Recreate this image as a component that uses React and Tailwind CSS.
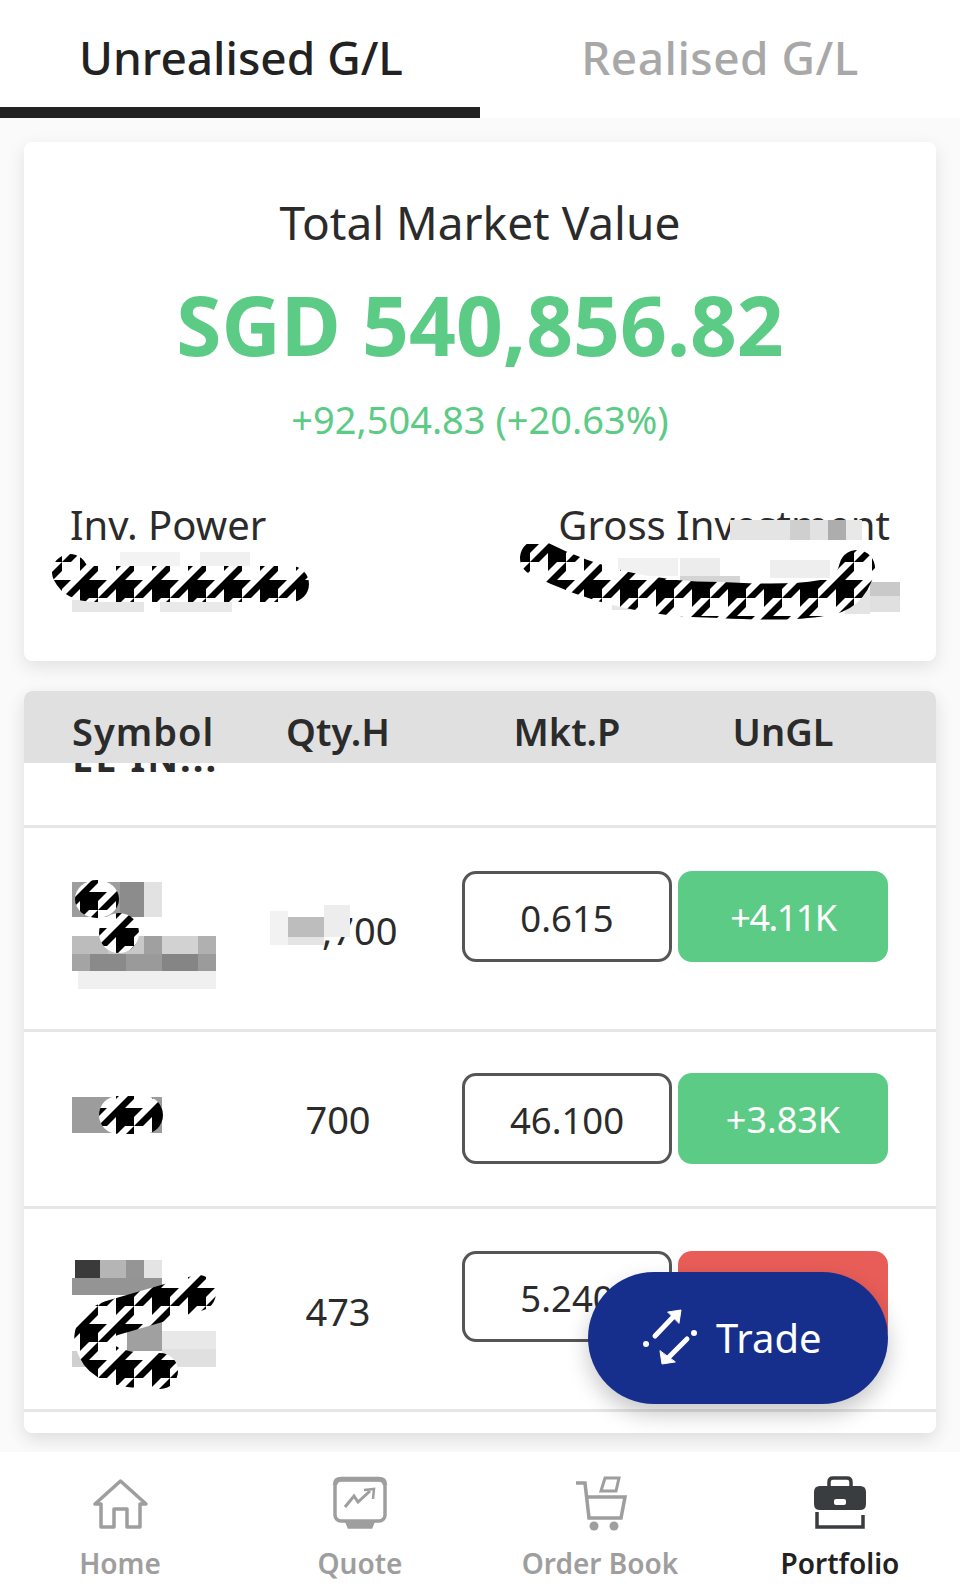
import { Fragment } from 'react'

const rows = [
  { qty: '15,700', price: '0.615', gl: '+4.11K', up: true, h: 'h-[204px]', pt: 'pt-[43px]', lh: 'leading-[118px]', glText: 'tracking-[-1.5px]' },
  { qty: '700', price: '46.100', gl: '+3.83K', up: true, h: 'h-[177px]', pt: 'pt-[41px]', lh: 'leading-[92px]', glText: '' },
  { qty: '473', price: '5.240', gl: '-1.02K', up: false, h: 'h-[203px]', pt: 'pt-[42px]', lh: 'leading-[120px]', glText: '' },
]

// pixelated blur blocks left over the private values: x, y, w, h, colour
const blocks = [
  [120, 552, 60, 14, '#f3f3f3'], [200, 552, 50, 14, '#f0f0f0'], [72, 600, 72, 12, '#e6e6e6'], [160, 600, 72, 12, '#e9e9e9'],
  [730, 520, 60, 20, '#e4e4e4'], [790, 520, 20, 20, '#cfcfcf'], [810, 520, 18, 20, '#e2e2e2'], [828, 520, 18, 20, '#adadad'], [846, 520, 16, 20, '#e8e8e8'],
  [618, 558, 60, 18, '#f1f1f1'], [680, 558, 40, 18, '#ececec'], [770, 560, 60, 18, '#eeeeee'], [680, 576, 60, 10, '#d4d4d4'],
  [612, 598, 30, 12, '#e6e6e6'], [845, 590, 25, 24, '#e4e4e4'], [870, 582, 30, 14, '#c9c9c9'], [870, 596, 30, 16, '#e0e0e0'],
  [72, 882, 48, 35, '#9d9d9d'], [120, 882, 24, 35, '#8c8c8c'], [144, 882, 18, 35, '#e2e2e2'],
  [72, 936, 36, 18, '#bcbcbc'], [108, 936, 36, 18, '#c8c8c8'], [144, 936, 18, 18, '#a0a0a0'], [162, 936, 36, 18, '#d2d2d2'], [198, 936, 18, 18, '#b0b0b0'],
  [72, 954, 18, 17, '#a4a4a4'], [90, 954, 36, 17, '#8a8a8a'], [126, 954, 36, 17, '#9a9a9a'], [162, 954, 36, 17, '#858585'], [198, 954, 18, 17, '#9b9b9b'],
  [78, 971, 138, 18, '#f0f0f0'],
  [270, 911, 18, 34, '#f2f2f2'], [288, 917, 36, 20, '#bdbdbd'], [288, 937, 36, 8, '#e4e4e4'], [324, 905, 26, 32, '#ededed'],
  [72, 1097, 90, 36, '#9c9c9c'],
  [75, 1260, 45, 18, '#3a3a3a'], [100, 1260, 44, 18, '#b5b5b5'], [126, 1260, 18, 35, '#959595'], [144, 1260, 18, 18, '#e4e4e4'],
  [72, 1278, 90, 17, '#949494'], [127, 1318, 35, 33, '#a0a0a0'], [162, 1331, 54, 18, '#e8e8e8'], [162, 1349, 54, 18, '#e0e0e0'], [72, 1351, 22, 16, '#cfcfcf'],
]

function Nav({ label, active, children }) {
  return (
    <div className="flex-1 flex flex-col items-center">
      <div className="h-[64px] w-[64px] mt-[22px]">{children}</div>
      <span className={`mt-[8px] text-[28px] leading-[34px] font-semibold ${active ? 'text-[#222]' : 'text-[#9e9e9e]'}`}>{label}</span>
    </div>
  )
}

function Tooth({ id, y }) {
  return (
    <pattern id={id} width="36" height="36" patternUnits="userSpaceOnUse" patternTransform={`translate(8 ${y})`}>
      <g transform="scale(4.5)" fill="#000">
        <rect width="8" height="8" fill="#fff" />
        <rect x="0" y="4" width="4" height="4" />
        <polygon points="0,0 2,0 0,2" />
        <polygon points="0,4 4,0 4,2 2,4" />
        <polygon points="4,4 6,4 4,6" />
        <polygon points="8,4 8,6 6,8 4,8" />
      </g>
    </pattern>
  )
}

export default function App() {
  return (
    <div className="relative h-[1590px] w-[960px] overflow-hidden bg-[#fafafa] flex flex-col text-[#2b2b2b] font-['Noto_Sans','Open_Sans',sans-serif]">
      <div className="flex h-[118px] bg-white shrink-0">
        <div className="w-[480px] border-b-[11px] border-[#222] text-[46px] leading-[118px] h-[118px] font-medium text-center text-[#222]">
          <span className="relative top-[-2px] left-[1px]">Unrealised G/L</span>
        </div>
        <div className="w-[480px] text-[46px] leading-[114px] tracking-[0.5px] font-medium text-center text-[#a8a8a8]">Realised G/L</div>
      </div>

      <div className="mx-[24px] mt-[24px] h-[519px] shrink-0 bg-white rounded-[8px] shadow-[0_6px_18px_rgba(0,0,0,0.10)] pt-[50px] text-center">
        <div className="text-[46px] leading-[60px]">Total Market Value</div>
        <div className="text-[82px] leading-[100px] mt-[22px] font-bold text-[#5ccb85]">SGD 540,856.82</div>
        <div className="text-[38px] leading-[50px] mt-[20px] text-[#5ccb85]">+92,504.83 (+20.63%)</div>
        <div className="flex justify-between px-[46px] mt-[54px] text-[40px] leading-[54px]">
          <span>Inv. Power</span>
          <span>Gross Investment</span>
        </div>
      </div>

      <div className="mx-[24px] mt-[30px] h-[742px] shrink-0 bg-white rounded-[8px] shadow-[0_6px_18px_rgba(0,0,0,0.12)] overflow-hidden">
        <div className="flex h-[72px] bg-[#e0e0e0] rounded-t-[8px] pl-[48px] text-[38px] leading-[80px] font-semibold">
          <span className="w-[171px] tracking-[1px]">Symbol</span>
          <span className="w-[190px] text-center">Qty.H</span>
          <span className="w-[210px] ml-[29px] text-center">Mkt.P</span>
          <span className="w-[210px] ml-[6px] text-center">UnGL</span>
        </div>
        <div className="h-[65px] overflow-hidden border-b-[3px] border-[#e6e6e6] pl-[48px] text-[38px] tracking-[2px] font-bold leading-[40px]">
          <div className="-mt-[26px]">EE IN...</div>
        </div>
        {rows.map((r) => (
          <div key={r.price} className={`flex ${r.h} ${r.pt} pl-[48px] border-b-[3px] border-[#e6e6e6]`}>
            <span className="w-[171px]" />
            <span className={`w-[190px] text-center text-[38px] ${r.lh}`}>{r.qty}</span>
            <span className="w-[210px] h-[91px] ml-[29px] pt-[3px] flex items-center justify-center border-[3px] border-[#555] rounded-[14px] text-[36.5px]">{r.price}</span>
            <span className={`w-[210px] h-[91px] ml-[6px] pt-[3px] flex items-center justify-center rounded-[14px] text-[36px] text-white ${r.glText} ${r.up ? 'bg-[#5ccb85]' : 'bg-[#e85d58]'}`}>{r.gl}</span>
          </div>
        ))}
      </div>

      <div className="absolute bottom-0 left-0 right-0 h-[138px] bg-white flex">
        <Nav label="Home">
          <svg viewBox="0 0 64 64" fill="none" stroke="#9e9e9e" strokeWidth="3.5" strokeLinejoin="round" className="h-full w-full">
            <path d="M32.5 7 L7 30 H13 V53 H26 V35 H39 V53 H52 V30 H58 Z" />
          </svg>
        </Nav>
        <Nav label="Quote">
          <svg viewBox="0 0 64 64" fill="none" stroke="#9e9e9e" strokeWidth="3.5" className="h-full w-full">
            <rect x="7" y="6" width="50" height="41" rx="6" />
            <path d="M7 11 Q7 5 13 5 H51 Q57 5 57 11" strokeWidth="4.5" />
            <path d="M19 48 H45 L43 53 H21 Z" fill="#9e9e9e" />
            <path d="M17 33 L26 22 L30 28 L42 17" strokeWidth="3" />
            <path d="M36 16 L46 15 L45 25" strokeWidth="2.5" />
          </svg>
        </Nav>
        <Nav label="Order Book">
          <svg viewBox="0 0 64 64" fill="none" stroke="#9e9e9e" strokeWidth="3.5" className="h-full w-full">
            <path d="M8 9 H17 L21 44 H53 L57 23 H19" />
            <path d="M33 17 L37 4 H51 L48 17 Z" strokeWidth="3" />
            <circle cx="26" cy="52" r="4.5" fill="#9e9e9e" stroke="none" />
            <circle cx="46" cy="52" r="4.5" fill="#9e9e9e" stroke="none" />
          </svg>
        </Nav>
        <Nav label="Portfolio" active>
          <svg viewBox="0 0 64 64" fill="none" className="h-full w-full">
            <path d="M21 13 V8 Q21 4 25 4 H39 Q43 4 43 8 V13" stroke="#3a3d40" strokeWidth="3.5" />
            <path d="M12 12 H52 Q58 12 58 18 V30 Q58 36 52 36 H12 Q6 36 6 30 V18 Q6 12 12 12 Z" fill="#3a3d40" />
            <rect x="26" y="25" width="12" height="6" rx="2" fill="#fff" />
            <path d="M9 38 V53 H55 V41" stroke="#3a3d40" strokeWidth="3.5" />
          </svg>
        </Nav>
      </div>

      {/* redaction marks painted on the screenshot */}
      <svg className="absolute inset-0 pointer-events-none" width="960" height="1590">
        <defs>
          <Tooth id="tooth" y={22} />
          <Tooth id="tooth2" y={10} />
        </defs>
        {blocks.map(([x, y, w, h, c], i) => (
          <Fragment key={i}>
            <rect x={x} y={y} width={w} height={h} fill={c} />
          </Fragment>
        ))}
        <ellipse cx="97" cy="899" rx="22" ry="19" fill="url(#tooth2)" />
        <circle cx="119" cy="933" r="20" fill="url(#tooth2)" />
        <g fill="none" stroke="url(#tooth)" strokeLinecap="round" strokeLinejoin="round">
          <path d="M70 572 Q76 584 95 584 L291 584" strokeWidth="36" />
          <path d="M538 558 Q620 600 720 600 Q790 604 822 598 Q850 596 857 568" strokeWidth="36" />
          <path d="M118 1115 L144 1115" strokeWidth="38" stroke="url(#tooth2)" />
          <path d="M198 1293 L112 1318 Q84 1328 96 1350 Q106 1372 160 1371" strokeWidth="36" stroke="url(#tooth2)" />
        </g>
      </svg>

      <div className="absolute left-[588px] top-[1272px] w-[300px] h-[132px] rounded-full bg-[#172f8c] shadow-[0_10px_22px_rgba(0,0,0,0.22)] flex items-center pl-[52px] gap-[16px] text-white text-[40px]">
        <svg viewBox="0 0 60 60" width="60" height="60" fill="none" stroke="#fff" strokeWidth="5" strokeLinecap="round" className="shrink-0 relative -top-[1px]">
          <circle cx="6" cy="37" r="3" fill="#fff" stroke="none" />
          <path d="M15 29 L36 7" />
          <path d="M28 5 L41 3 L39 16 Z" fill="#fff" strokeWidth="1" />
          <circle cx="54" cy="26" r="3" fill="#fff" stroke="none" />
          <path d="M47 32 L27 52" />
          <path d="M20 44 L22 57 L35 55 Z" fill="#fff" strokeWidth="1" />
        </svg>
        <span>Trade</span>
      </div>
    </div>
  )
}
